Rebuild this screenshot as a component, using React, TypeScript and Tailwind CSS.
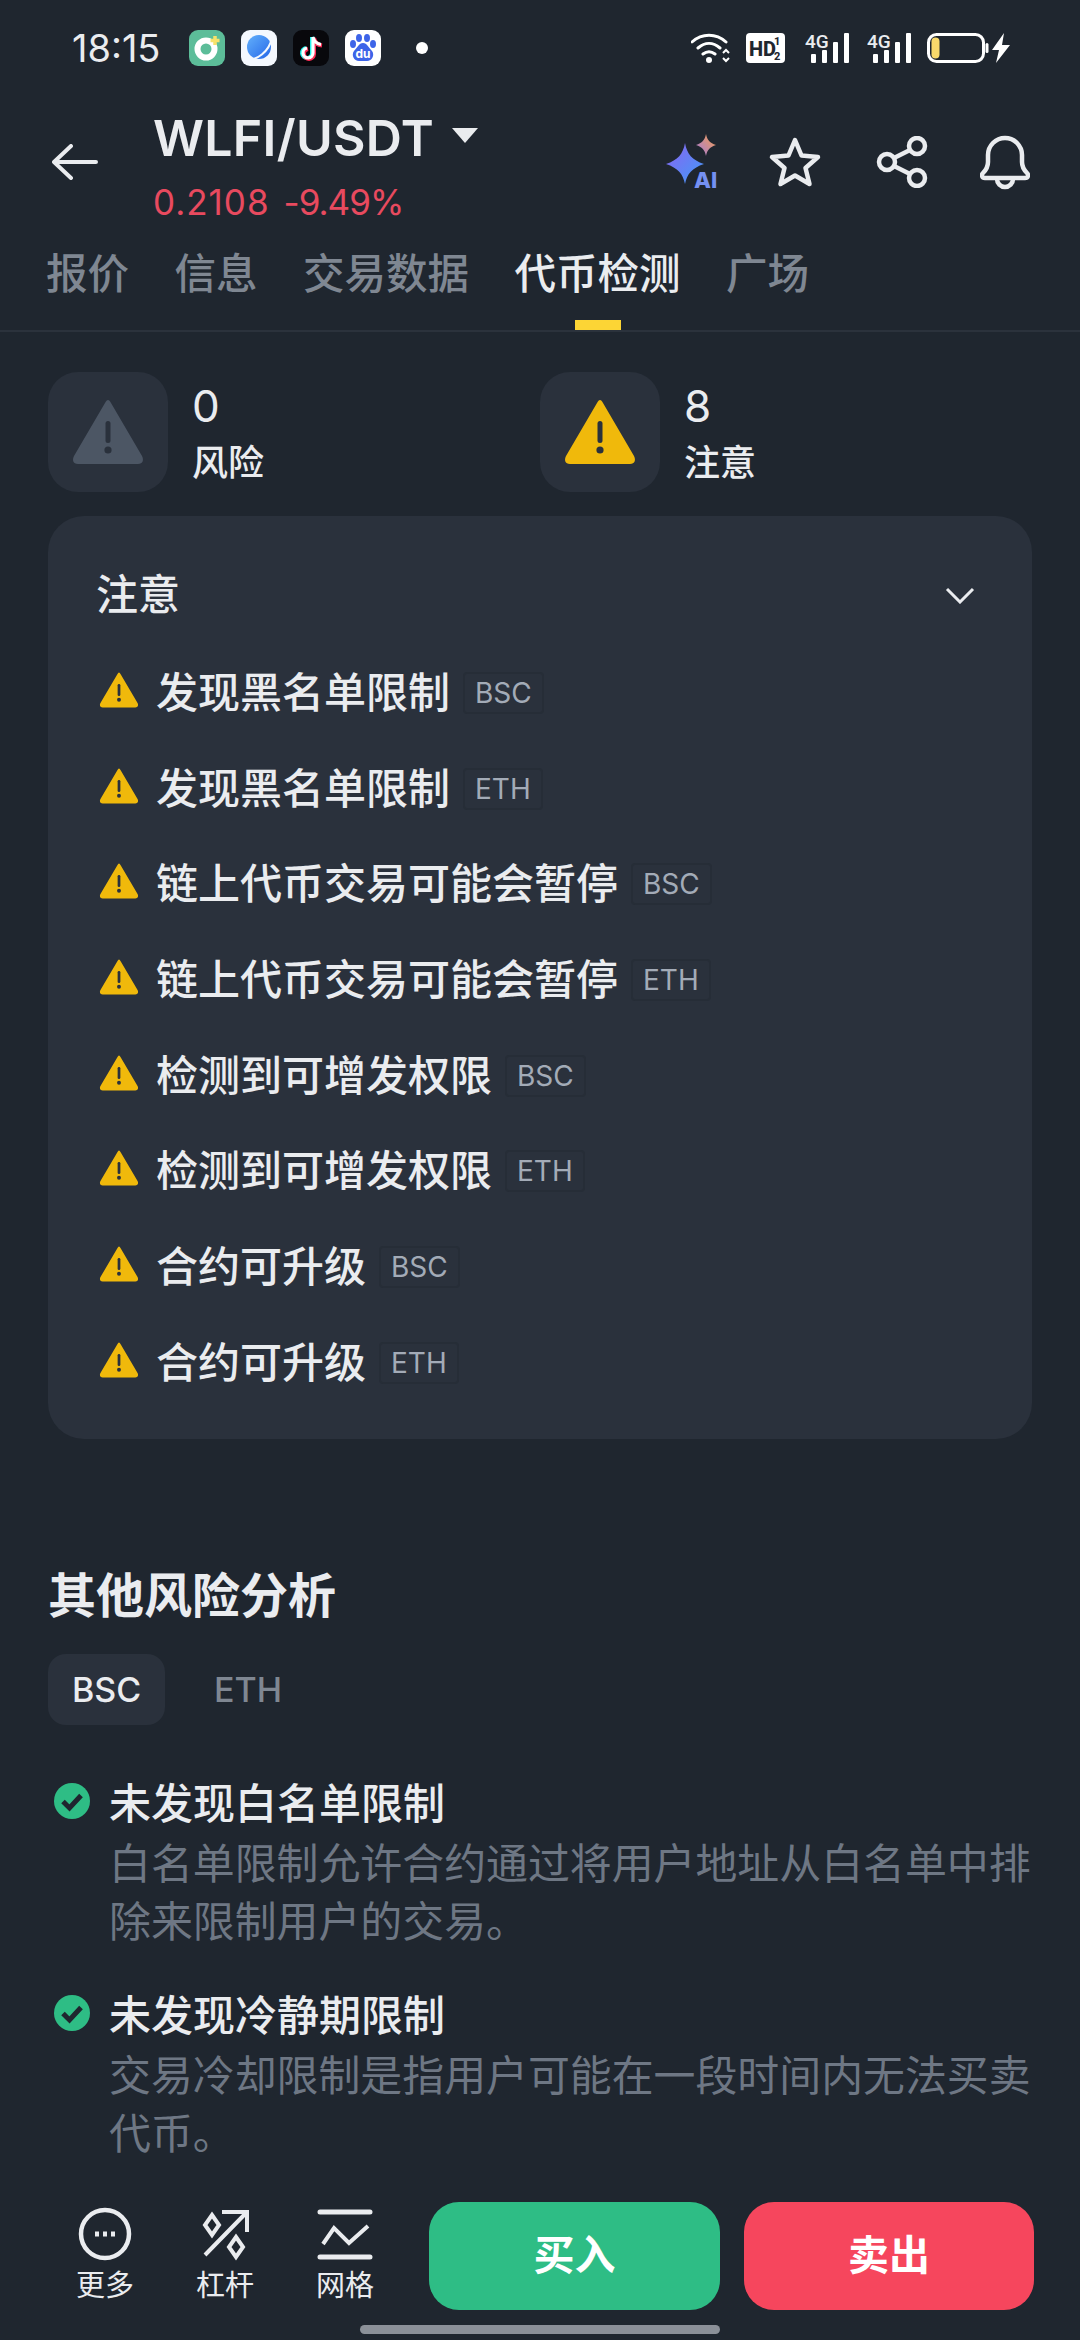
import { useId } from 'react';

const warnings = [
  { label: '发现黑名单限制', chain: 'BSC' },
  { label: '发现黑名单限制', chain: 'ETH' },
  { label: '链上代币交易可能会暂停', chain: 'BSC' },
  { label: '链上代币交易可能会暂停', chain: 'ETH' },
  { label: '检测到可增发权限', chain: 'BSC' },
  { label: '检测到可增发权限', chain: 'ETH' },
  { label: '合约可升级', chain: 'BSC' },
  { label: '合约可升级', chain: 'ETH' },
];

const checks = [
  {
    title: '未发现白名单限制',
    desc: '白名单限制允许合约通过将用户地址从白名单中排除来限制用户的交易。',
  },
  {
    title: '未发现冷静期限制',
    desc: '交易冷却限制是指用户可能在一段时间内无法买卖代币。',
  },
];

const tabs = ['报价', '信息', '交易数据', '代币检测', '广场'];

function WarnIcon({ className, fill, mark }: { className: string; fill: string; mark: string }) {
  return (
    <svg viewBox="0 0 72 66" className={className}>
      <path d="M36 1C37 1 38 2 39 4L70 57C72 61 71 65 66 65H6C1 65 0 61 2 57L33 4C34 2 35 1 36 1Z" fill={fill} />
      <rect x="33.5" y="22" width="5" height="22" rx="2.5" fill={mark} />
      <circle cx="36" cy="51" r="3.6" fill={mark} />
    </svg>
  );
}

function CheckIcon() {
  return (
    <svg viewBox="0 0 36 36" className="h-[36px] w-[36px] shrink-0">
      <circle cx="18" cy="18" r="18" fill="#2ebd85" />
      <path d="M9 18.5L15.5 25L27 12.5" fill="none" stroke="#1f262f" strokeWidth="5" />
    </svg>
  );
}

function Signal() {
  return (
    <svg viewBox="0 -6 44 36" className="-mt-[6px] h-[36px] w-[44px]">
      <text x="0" y="15" fontSize="19" fontWeight="500" fill="#eaecef" fontFamily="Roboto, sans-serif">4G</text>
      <rect x="6" y="21" width="5" height="9" rx="1" fill="#fff" />
      <rect x="17" y="17" width="5" height="13" rx="1" fill="#fff" />
      <rect x="28" y="9" width="5" height="21" rx="1" fill="#fff" />
      <rect x="39" y="0" width="5" height="30" rx="1" fill="#fff" />
    </svg>
  );
}

function StatusBar() {
  return (
    <div className="flex h-[96px] shrink-0 items-center pl-[72px] pr-[69px]">
      <span className="w-[117px] text-[38px] leading-[44px] text-[#eaecef]">18:15</span>
      <div className="flex items-center gap-[16px]">
        <svg viewBox="0 0 36 36" className="h-[36px] w-[36px]">
          <rect width="36" height="36" rx="9" fill="#5cbd99" />
          <circle cx="17" cy="19" r="8.5" fill="none" stroke="#fff" strokeWidth="6" />
          <path d="M26 6v9M21.500 10.500h9" stroke="#f7e26b" strokeWidth="3.500" />
        </svg>
        <svg viewBox="0 0 36 36" className="h-[36px] w-[36px]">
          <defs>
            <linearGradient id="planet" x1="0" y1="0" x2="1" y2="1">
              <stop offset="0" stopColor="#63b0fb" />
              <stop offset="1" stopColor="#2567e8" />
            </linearGradient>
          </defs>
          <rect width="36" height="36" rx="9" fill="#f4f8fe" />
          <circle cx="18" cy="17" r="12" fill="url(#planet)" />
          <path d="M6 30C16 30 28 22 31 8" fill="none" stroke="#f4f8fe" strokeWidth="2" />
        </svg>
        <svg viewBox="0 0 36 36" className="h-[36px] w-[36px]">
          <rect width="36" height="36" rx="9" fill="#08080c" />
          <path d="M20 7V23A5 5 0 1 1 14 18M20 7C21 12 24 14 28 14.500" fill="none" stroke="#25f4ee" strokeWidth="4" transform="translate(-1 0)" />
          <path d="M20 7V23A5 5 0 1 1 14 18M20 7C21 12 24 14 28 14.500" fill="none" stroke="#fe2c55" strokeWidth="4" transform="translate(1 1)" />
          <path d="M20 7V23A5 5 0 1 1 14 18M20 7C21 12 24 14 28 14.500" fill="none" stroke="#fff" strokeWidth="3.200" />
        </svg>
        <svg viewBox="0 0 36 36" className="h-[36px] w-[36px]">
          <rect width="36" height="36" rx="9" fill="#fff" />
          <ellipse cx="8" cy="14" rx="3" ry="4" fill="#3d64e8" />
          <ellipse cx="14" cy="8" rx="3" ry="4" fill="#3d64e8" />
          <ellipse cx="22" cy="8" rx="3" ry="4" fill="#3d64e8" />
          <ellipse cx="28" cy="14" rx="3" ry="4" fill="#3d64e8" />
          <path d="M18 13C22 13 24 18 27 21C30 25 27 31 22 31H14C9 31 6 25 9 21C12 18 14 13 18 13Z" fill="#3d64e8" />
          <text x="18" y="28" textAnchor="middle" fontSize="12" fontWeight="700" fill="#fff" fontFamily="Inter, sans-serif">du</text>
        </svg>
      </div>
      <span className="ml-[35px] h-[12px] w-[12px] rounded-full bg-white" />
      <div className="ml-auto flex items-center">
        <svg viewBox="0 0 40 30" className="h-[30px] w-[40px]">
          <path d="M1 9C11 0 25 0 35 9M7 15C14 9 22 9 29 15M12 21C16 18 20 18 24 21" fill="none" stroke="#fff" strokeWidth="3" strokeLinecap="round" />
          <circle cx="18" cy="27" r="3" fill="#fff" />
          <path d="M32 20l3-3 3 3M32 25l3 3 3-3" fill="none" stroke="#fff" strokeWidth="2" />
        </svg>
        <svg viewBox="0 0 39 30" className="ml-[15px] h-[30px] w-[39px]">
          <rect width="39" height="30" rx="4" fill="#fff" />
          <text x="3" y="23" fontSize="20" fontWeight="800" fill="#1f262f" fontFamily="Roboto, sans-serif">HD</text>
          <text x="28" y="12" fontSize="11" fontWeight="800" fill="#1f262f" fontFamily="Roboto, sans-serif">1</text>
          <text x="28" y="27" fontSize="11" fontWeight="800" fill="#1f262f" fontFamily="Roboto, sans-serif">2</text>
        </svg>
        <div className="ml-[20px]">
          <Signal />
        </div>
        <div className="ml-[18px]">
          <Signal />
        </div>
        <svg viewBox="0 0 84 30" className="ml-[16px] h-[30px] w-[84px]">
          <rect x="1.500" y="1.500" width="55" height="27" rx="8" fill="none" stroke="#fff" strokeWidth="3" />
          <rect x="4.500" y="4.500" width="8" height="21" rx="4" fill="#f8d96b" />
          <rect x="58.500" y="10" width="3" height="10" rx="1.500" fill="#fff" />
          <path d="M77 0L65 17H72L69 30L83 12H75Z" fill="#fff" />
        </svg>
      </div>
    </div>
  );
}

function AiIcon() {
  const id = useId();
  return (
    <svg viewBox="0 0 56 60" className="-mb-[4px] h-[60px] w-[56px]">
      <defs>
        <linearGradient id={`${id}a`} x1="0" y1="0" x2="1" y2="1">
          <stop offset="0" stopColor="#8c62f2" />
          <stop offset="1" stopColor="#3f9cf7" />
        </linearGradient>
        <linearGradient id={`${id}b`} x1="1" y1="0" x2="0" y2="1">
          <stop offset="0" stopColor="#f6a04d" />
          <stop offset="1" stopColor="#a27ae0" />
        </linearGradient>
      </defs>
      <path d="M19 9C21 20 26 26 38 30C26 34 21 40 19 50C17 40 12 34 0 30C12 26 17 20 19 9Z" fill={`url(#${id}a)`} />
      <path d="M40 0C41 6 44 9 50 11C44 13 41 16 40 22C39 16 36 13 30 11C36 9 39 6 40 0Z" fill={`url(#${id}b)`} />
      <text x="28" y="54" fontSize="22" fontWeight="800" fill="#7590f2" fontFamily="Inter, sans-serif">AI</text>
    </svg>
  );
}

function Header() {
  return (
    <div className="flex h-[132px] shrink-0 items-center pl-[52px]">
      <svg viewBox="0 0 46 36" className="h-[36px] w-[46px]">
        <path d="M44 18H2M19 2L2 18L19 34" fill="none" stroke="#eaecef" strokeWidth="4" strokeLinecap="round" strokeLinejoin="round" />
      </svg>
      <div className="ml-[55px] mt-[9px] flex flex-col">
        <div className="flex h-[64px] items-center">
          <span className="text-[50px] font-semibold leading-[64px] tracking-[0.3px] text-[#eaecef]">WLFI/USDT</span>
          <svg viewBox="0 0 26 15" className="mb-[4px] ml-[18px] h-[15px] w-[26px]">
            <path d="M0 0H26L13 15Z" fill="#eaecef" />
          </svg>
        </div>
        <div className="mt-[6px] flex gap-[14px] text-[35px] leading-[52px] text-[#e84a5f]">
          <span className="tracking-[1px]">0.2108</span>
          <span className="tracking-[-1px]">-9.49%</span>
        </div>
      </div>
      <div className="ml-auto mr-[50px] flex items-center">
        <AiIcon />
        <svg viewBox="0 0 54 52" className="ml-[46px] h-[52px] w-[54px]">
          <path d="M27 4L33.500 19.500L50 21L37.500 32L41.500 48L27 39.500L12.500 48L16.500 32L4 21L20.500 19.500Z" fill="none" stroke="#eaecef" strokeWidth="4.500" strokeLinejoin="round" />
        </svg>
        <svg viewBox="0 0 52 52" className="ml-[54px] h-[52px] w-[52px]">
          <circle cx="41" cy="10" r="8" fill="none" stroke="#eaecef" strokeWidth="4.500" />
          <circle cx="11" cy="26" r="8" fill="none" stroke="#eaecef" strokeWidth="4.500" />
          <circle cx="41" cy="42" r="8" fill="none" stroke="#eaecef" strokeWidth="4.500" />
          <path d="M18 22L34 14M18 30L34 38" stroke="#eaecef" strokeWidth="4.500" />
        </svg>
        <svg viewBox="0 0 50 56" className="ml-[52px] h-[56px] w-[50px]">
          <path d="M8 21A17 17 0 0 1 42 21V28C42 34 45 37 47 39C49 41 48 44 45 44H5C2 44 1 41 3 39C5 37 8 34 8 28Z" fill="none" stroke="#eaecef" strokeWidth="4.500" strokeLinejoin="round" />
          <path d="M17 45A8 8 0 0 0 33 45" fill="none" stroke="#eaecef" strokeWidth="4.500" />
        </svg>
      </div>
    </div>
  );
}

function Tabs() {
  return (
    <div className="flex h-[104px] shrink-0 gap-[45.500px] border-b-2 border-[#2b323c] pl-[46px]">
      {tabs.map((tab) => {
        const active = tab === '代币检测';
        return (
          <div key={tab} className="flex flex-col items-center justify-between pt-[22px]">
            <span className={active ? 'text-[41.500px] font-medium leading-[48px] text-[#eaecef]' : 'text-[41.500px] font-medium leading-[48px] text-[#7f8792]'}>
              {tab}
            </span>
            {active && <span className="h-[10px] w-[46px] bg-[#fcd535]" />}
          </div>
        );
      })}
    </div>
  );
}

function StatCard({ count, label, fill, mark }: { count: string; label: string; fill: string; mark: string }) {
  return (
    <div className="flex w-[492px] items-center">
      <div className="flex h-[120px] w-[120px] items-center justify-center rounded-[30px] bg-[#2a313c]">
        <WarnIcon className="h-[66px] w-[72px]" fill={fill} mark={mark} />
      </div>
      <div className="ml-[24px] flex flex-col pt-[2px]">
        <span className="text-[44px] leading-[56px] text-[#eaecef]">{count}</span>
        <span className="mt-[4px] text-[36px] font-medium leading-[50px] text-[#eaecef]">{label}</span>
      </div>
    </div>
  );
}

function WarningCard() {
  return (
    <div className="mx-[48px] mt-[24px] rounded-[36px] bg-[#2a313c] pb-[28px] pl-[50px] pr-[57px] pt-[51px]">
      <div className="mb-[22px] flex h-[56px] items-center justify-between">
        <span className="-ml-[2px] text-[42px] font-medium leading-[56px] text-[#eaecef]">注意</span>
        <svg viewBox="0 0 30 17" className="h-[17px] w-[30px]">
          <path d="M2 2L15 15L28 2" fill="none" stroke="#eaecef" strokeWidth="3" />
        </svg>
      </div>
      {warnings.map((row, i) => (
        <div key={i} className="flex h-[95.700px] items-center">
          <WarnIcon className="mb-[6px] h-[36px] w-[42px]" fill="#f0b90b" mark="#2a313c" />
          <span className="ml-[16px] text-[42px] font-medium leading-[56px] text-[#eaecef]">{row.label}</span>
          <span className="ml-[13px] flex h-[42px] items-center rounded-[4px] border-2 border-[#262d37] px-[10px] text-[28px] leading-[36px] text-[#a3abb7]">
            {row.chain}
          </span>
        </div>
      ))}
    </div>
  );
}

function OtherRisks() {
  return (
    <div className="px-[48px]">
      <h2 className="mt-[127px] text-[48px] font-semibold leading-[60px] text-[#eaecef]">其他风险分析</h2>
      <div className="mt-[28px] flex items-center">
        <span className="flex h-[71px] w-[117px] items-center justify-center rounded-[18px] bg-[#2a313c] text-[34px] font-medium text-[#eaecef]">
          BSC
        </span>
        <span className="ml-[49px] text-[34px] font-medium text-[#7f8792]">ETH</span>
      </div>
      <div className="mt-[50px] flex flex-col gap-[36px]">
        {checks.map((c) => (
          <div key={c.title} className="flex">
            <div className="ml-[6px] mt-[8px]">
              <CheckIcon />
            </div>
            <div className="ml-[19px] flex-1">
              <div className="text-[42px] font-medium leading-[58px] text-[#eaecef]">{c.title}</div>
              <div className="mt-[2px] text-[41.900px] leading-[58px] text-[#6e7784]">{c.desc}</div>
            </div>
          </div>
        ))}
      </div>
    </div>
  );
}

function BottomBar() {
  const tools = [
    {
      label: '更多',
      icon: (
        <g fill="none" stroke="#eaecef" strokeWidth="4.500">
          <circle cx="30" cy="28" r="24" />
          <path d="M20 28h4M28 28h4M36 28h4" strokeWidth="5" />
        </g>
      ),
    },
    {
      label: '杠杆',
      icon: (
        <g fill="none" stroke="#eaecef" strokeWidth="4">
          <path d="M10 49L51 7M27 6H52V26" />
          <path d="M17 9L24 19L17 29L10 19Z" />
          <path d="M41 31L48 41L41 51L34 41Z" />
        </g>
      ),
    },
    {
      label: '网格',
      icon: (
        <g fill="none" stroke="#eaecef" strokeWidth="5">
          <path d="M5 6H55M5 51H55" strokeLinecap="round" />
          <path d="M8 38L19 22L34 37L53 20" strokeWidth="4" />
        </g>
      ),
    },
  ];

  return (
    <div className="h-[180px] shrink-0 pt-[42px]">
      <div className="flex h-[108px] pl-[45px]">
        {tools.map((tool) => (
          <div key={tool.label} className="flex w-[120px] flex-col items-center pt-[4px]">
            <svg viewBox="0 0 60 58" className="h-[58px] w-[60px]">
              {tool.icon}
            </svg>
            <span className="mt-[4px] text-[29px] leading-[36px] text-[#eaecef]">{tool.label}</span>
          </div>
        ))}
        <button type="button" className="ml-[24px] h-[108px] w-[291px] rounded-[30px] bg-[#2ebd85] text-[41px] font-semibold text-white">
          买入
        </button>
        <button type="button" className="ml-[24px] h-[108px] w-[290px] rounded-[30px] bg-[#f6465d] text-[41px] font-semibold text-white">
          卖出
        </button>
      </div>
      <div className="mx-auto mt-[15px] h-[9px] w-[360px] rounded-full bg-[#8b9098]" />
    </div>
  );
}

export default function App() {
  return (
    <div className="flex h-[2340px] w-[1080px] flex-col overflow-hidden bg-[#1f262f] font-['Inter','Noto_Sans_CJK_SC',sans-serif]">
      <StatusBar />
      <Header />
      <Tabs />
      <div className="min-h-0 flex-1 overflow-hidden">
        <div className="flex pl-[48px] pt-[40px]">
          <StatCard count="0" label="风险" fill="#4c5664" mark="#2a313c" />
          <StatCard count="8" label="注意" fill="#f0b90b" mark="#2a313c" />
        </div>
        <WarningCard />
        <OtherRisks />
      </div>
      <BottomBar />
    </div>
  );
}
